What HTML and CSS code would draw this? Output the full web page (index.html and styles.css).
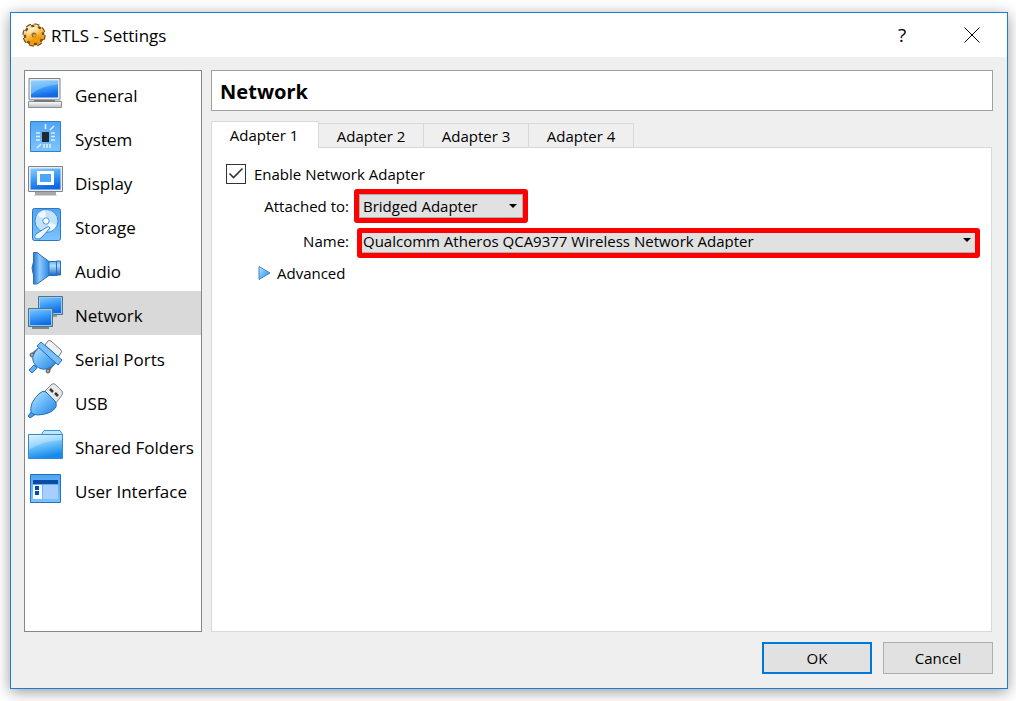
FILE: index.html
```html
<!DOCTYPE html>
<html lang="en">
  <head>
    <meta charset="UTF-8" />
    <title>RTLS - Settings</title>
    <link rel="stylesheet" href="styles.css">
  </head>
  <body>
    <!-- Shared icon gradients -->
    <svg class="defs" width="0" height="0" aria-hidden="true">
      <defs>
        <linearGradient id="screen" x1="0" y1="0" x2="0.3" y2="1">
          <stop offset="0" stop-color="#8accff" />
          <stop offset="0.5" stop-color="#3f9ef8" />
          <stop offset="1" stop-color="#0f68e4" />
        </linearGradient>
        <linearGradient id="sky" x1="0" y1="0" x2="0" y2="1">
          <stop offset="0" stop-color="#4fa5f2" />
          <stop offset="1" stop-color="#7cc4ff" />
        </linearGradient>
        <linearGradient id="metal" x1="0" y1="0" x2="0" y2="1">
          <stop offset="0" stop-color="#ffffff" />
          <stop offset="1" stop-color="#b9bcbe" />
        </linearGradient>
        <linearGradient id="plug" x1="0" y1="0" x2="1" y2="1">
          <stop offset="0" stop-color="#c5e6ff" />
          <stop offset="0.5" stop-color="#65b7fa" />
          <stop offset="1" stop-color="#2380dc" />
        </linearGradient>
        <linearGradient id="folder" x1="0" y1="0" x2="0.3" y2="1">
          <stop offset="0" stop-color="#d5f1ff" />
          <stop offset="0.45" stop-color="#7dcafc" />
          <stop offset="1" stop-color="#158bed" />
        </linearGradient>
        <linearGradient id="horn" x1="0" y1="0" x2="1" y2="0">
          <stop offset="0" stop-color="#2478cf" />
          <stop offset="0.4" stop-color="#8ecbff" />
          <stop offset="1" stop-color="#2a86e2" />
        </linearGradient>
        <linearGradient id="pipe" x1="0" y1="0" x2="0" y2="1">
          <stop offset="0" stop-color="#5fb0f8" />
          <stop offset="0.3" stop-color="#b4dfff" />
          <stop offset="1" stop-color="#1668c4" />
        </linearGradient>
        <linearGradient id="gold" x1="0" y1="0" x2="0.4" y2="1">
          <stop offset="0" stop-color="#fff3d6" />
          <stop offset="0.5" stop-color="#f9c55c" />
          <stop offset="1" stop-color="#f09a0c" />
        </linearGradient>
      </defs>
    </svg>

    <div class="window">
      <header class="title-bar">
        <svg class="gear" viewBox="0 0 24 24" aria-hidden="true">
          <g fill="none" stroke="#7d4a12">
            <circle cx="12" cy="12" r="8.500" stroke-width="4" />
            <circle cx="12" cy="12" r="9.700" stroke-width="4" stroke-dasharray="4.600 3.020" />
          </g>
          <g fill="none" stroke="url(#gold)">
            <circle cx="12" cy="12" r="5" stroke-width="6" />
            <circle cx="12" cy="12" r="9" stroke-width="3" stroke-dasharray="4 3.070" />
          </g>
          <circle cx="12" cy="12" r="2.500" fill="#a66a1e" />
          <circle cx="12.500" cy="12.500" r="1.300" fill="#e0b16b" />
        </svg>
        <h1>RTLS - Settings</h1>
        <button type="button" class="title-button" aria-label="Help">?</button>
        <button type="button" class="title-button" aria-label="Close">
          <svg width="16" height="16" viewBox="0 0 16 16" aria-hidden="true">
            <path d="M0.500 0.500l15 15M15.500 0.500l-15 15" stroke="#000" />
          </svg>
        </button>
      </header>

      <div class="content">
        <!-- Categories -->
        <nav class="sidebar">
          <a href="#general">
            <svg viewBox="0 0 36 36" aria-hidden="true">
              <path d="M2 3.500h31v21H2z" fill="#e9ebec" stroke="#7e8385" />
              <path d="M4 5.500h27v17H4z" fill="url(#screen)" />
              <path d="M4 5.500h27v4q-16 1-27 10z" fill="#a8daff" opacity=".45" />
              <path d="M3 24.500h30l1.500 2h-33z" fill="#c9cccd" />
              <path d="M1.500 26.500h33v6h-33z" fill="url(#metal)" stroke="#8b8f91" />
              <path d="M7 25h21v2H7z" fill="#777b7d" />
            </svg>
            General
          </a>
          <a href="#system">
            <svg viewBox="0 0 36 36" aria-hidden="true">
              <path d="M3.500 2.500h30v30h-30z" fill="url(#sky)" stroke="#3180cd" />
              <path d="M15 13h7v10h-7z" fill="#222a31" />
              <path d="M18.500 5v5M23 11l4-4M9 14h4M9 17.500h4M9 21h4M24 14h4M24 17.500h4M24 21h4M10 29l4-4M17 25v4M20 25v4M23 25v4" fill="none" stroke="#d9efff" stroke-width="1.600" />
            </svg>
            System
          </a>
          <a href="#display">
            <svg viewBox="0 0 36 36" aria-hidden="true">
              <path d="M1.500 3.500h34v25h-34z" fill="#e9ebec" stroke="#808688" />
              <path d="M3.500 5.500h30v21h-30z" fill="url(#screen)" />
              <path d="M11.500 9.500h14v11h-14z" fill="#4ba5f8" stroke="#fff" stroke-width="3" />
              <path d="M8 29h21v3H8z" fill="#a5a9ab" />
              <path d="M7 32.500h23" stroke="#d0d2d3" />
            </svg>
            Display
          </a>
          <a href="#storage">
            <svg viewBox="0 0 36 36" aria-hidden="true">
              <rect x="5.500" y="1.500" width="28" height="32" rx="2" fill="url(#sky)" stroke="#2b77c5" />
              <circle cx="19.500" cy="14" r="11.500" fill="#c3e3fd" stroke="#3c8ddd" />
              <path d="M19.500 14L10 8a11 11 0 0 1 8-5zM19.500 14l10 4a11 11 0 0 1-6 6z" fill="#fff" opacity=".7" />
              <circle cx="19" cy="14" r="3.200" fill="#fff" stroke="#4a9ae5" />
              <path d="M20 20q2-1 3 1l-7 8q-3 4-7 3-3-2 0-5z" fill="#edf7ff" stroke="#3985cf" />
            </svg>
            Storage
          </a>
          <a href="#audio">
            <svg viewBox="0 0 36 36" aria-hidden="true">
              <path d="M21 10.500h9v14h-9z" fill="url(#pipe)" stroke="#2b6fb7" />
              <path d="M29.500 10h4v14h-4z" fill="url(#pipe)" stroke="#2b6fb7" />
              <path d="M6.500 1.500H10l12 9v14l-12 8.500H6.500z" fill="url(#horn)" stroke="#2c70b8" />
              <path d="M6.500 11q-3 6 0 13z" fill="#3989d8" stroke="#2c70b8" />
            </svg>
            Audio
          </a>
          <a href="#network" class="active" aria-current="page">
            <svg viewBox="0 0 36 36" aria-hidden="true">
              <path d="M11.500 1.500h24v18h-24z" fill="url(#screen)" stroke="#557184" />
              <path d="M12.500 2.500h22v16h-22z" fill="none" stroke="#8dccff" />
              <path d="M17 20h13v2H17z" fill="#8f9a9f" />
              <path d="M1.500 13.500h24v18h-24z" fill="url(#screen)" stroke="#557184" />
              <path d="M2.500 14.500h22v16h-22z" fill="none" stroke="#8dccff" />
              <path d="M5 32h17v2H5z" fill="#7c878d" />
            </svg>
            Network
          </a>
          <a href="#serial-ports">
            <svg viewBox="0 0 36 36" aria-hidden="true">
              <path d="M18 6l3-4q1-1 3 0l10 9q1 1 0 3l-3 4z" fill="#eff1f2" stroke="#757d82" />
              <path d="M6 15l6-5M21 32l5-7" stroke="#68757e" stroke-width="3" />
              <circle cx="5" cy="16" r="2" fill="#a0a7ab" stroke="#555d62" />
              <circle cx="21" cy="32" r="2" fill="#a0a7ab" stroke="#555d62" />
              <path d="M7 26l-5 5 3 3 5-5z" fill="#5cb2f8" stroke="#2975b8" />
              <path d="M12 8l17 16-5 4q-8 5-15-1-6-7-1-14z" fill="url(#plug)" stroke="#256fb3" />
              <path d="M14 3l21 18-4 5L10 7z" fill="#79c1fb" stroke="#256fb3" />
            </svg>
            Serial Ports
          </a>
          <a href="#usb">
            <svg viewBox="0 0 36 36" aria-hidden="true">
              <path d="M18 8l7-7q2-1 4 1l6 6q1 2 0 4l-6 8z" fill="#e6e8e9" stroke="#7f878b" />
              <path d="M23 6l3 3M28 10l3 3" stroke="#34393c" stroke-width="2.500" />
              <path d="M5 28l-4 5 2 2 6-4z" fill="#3d9def" stroke="#266fb0" />
              <path d="M13 10q3-3 6-1l9 9q2 3 1 6-4 7-18 8-5 0-7-3-1-3 1-9 3-6 8-10z" fill="url(#plug)" stroke="#266fb0" />
            </svg>
            USB
          </a>
          <a href="#shared-folders">
            <svg viewBox="0 0 36 36" aria-hidden="true">
              <path d="M14 8l3-4.500h16l2.500 4v10H14z" fill="#bce7ff" stroke="#3c98dd" />
              <path d="M1.500 7.500h34v24h-34z" fill="url(#folder)" stroke="#3489d0" />
              <path d="M2 8h33v5q-18 0-33 10z" fill="#fff" opacity=".25" />
            </svg>
            Shared Folders
          </a>
          <a href="#user-interface">
            <svg viewBox="0 0 36 36" aria-hidden="true">
              <path d="M3.500 3.500h30v28h-30z" fill="url(#sky)" stroke="#2772c0" />
              <path d="M6 9h25v4H6z" fill="#0a4ba3" />
              <path d="M6 14h9v14H6z" fill="#f5faff" />
              <path d="M16 14h15v14H16z" fill="#a6ceff" />
              <path d="M8 15h4v4H8zM8 20h4v4H8z" fill="#0a4ba3" />
            </svg>
            User Interface
          </a>
        </nav>

        <main class="main">
          <h2>Network</h2>

          <div class="tabs" role="tablist">
            <button type="button" role="tab" class="tab selected" aria-selected="true">Adapter 1</button>
            <button type="button" role="tab" class="tab">Adapter 2</button>
            <button type="button" role="tab" class="tab">Adapter 3</button>
            <button type="button" role="tab" class="tab">Adapter 4</button>
          </div>

          <form class="panel" id="adapterForm">
            <label class="enable"><input type="checkbox" checked /> Enable Network Adapter</label>

            <div class="fields">
              <label for="attached">Attached to:</label>
              <div class="highlight attached">
                <select id="attached">
                  <option>Bridged Adapter</option>
                </select>
              </div>
              <label for="name">Name:</label>
              <div class="highlight name">
                <select id="name">
                  <option>Qualcomm Atheros QCA9377 Wireless Network Adapter</option>
                </select>
              </div>
            </div>

            <button type="button" class="advanced">
              <svg width="13" height="16" viewBox="0 0 13 16" aria-hidden="true">
                <path d="M1 1.500l11 6.500-11 6.500z" fill="url(#plug)" stroke="#3d87c9" />
              </svg>
              Advanced
            </button>
          </form>
        </main>
      </div>

      <footer class="buttons">
        <button type="submit" form="adapterForm" class="primary">OK</button>
        <button type="button">Cancel</button>
      </footer>
    </div>
  </body>
</html>
```
FILE: styles.css
```css
* {
  box-sizing: border-box;
}

body {
  margin: 0;
  min-height: 100vh;
  padding: 12px 8px 12px 10px;
  display: flex;
  background: #fff;
  font-family: "Open Sans", "Noto Sans", sans-serif;
  font-size: 15px;
  color: #000;
}

button,
select {
  font: inherit;
  color: inherit;
}

.defs {
  position: absolute;
}

.window {
  flex: 1;
  display: flex;
  flex-direction: column;
  background: #efefef;
  border: 1px solid #1a7fd4;
  box-shadow: 0 3px 14px rgba(0, 0, 0, 0.4);
}

/* Title bar */
.title-bar {
  display: flex;
  align-items: center;
  height: 44px;
  padding-left: 11px;
  background: #fff;
}

.gear {
  width: 24px;
  height: 24px;
  margin-right: 5px;
}

.title-bar h1 {
  flex: 1;
  margin: 0;
  font-size: 17px;
  font-weight: 400;
}

.title-button {
  width: 70px;
  height: 44px;
  padding: 0;
  border: none;
  background: none;
  font-size: 19px;
}

.title-button svg {
  display: block;
  margin: auto;
}

.content {
  flex: 1;
  display: flex;
  gap: 9px;
  padding: 13px 14px 0 13px;
}

/* Sidebar */
.sidebar {
  width: 178px;
  background: #fff;
  border: 1px solid #828790;
}

.sidebar a {
  display: flex;
  align-items: center;
  gap: 12px;
  height: 44px;
  padding: 4px 0 0 2px;
  color: #000;
  font-size: 17px;
  text-decoration: none;
  white-space: nowrap;
}

.sidebar a.active {
  background: #d9d9d9;
}

.sidebar svg {
  width: 36px;
  height: 36px;
  margin-bottom: 4px;
}

/* Settings page */
.main {
  flex: 1;
  display: flex;
  flex-direction: column;
}

.main h2 {
  height: 41px;
  margin: 0 0 10px;
  padding-left: 8px;
  border: 1px solid #a0a0a0;
  background: #fff;
  font-family: "Noto Sans", "Open Sans", sans-serif;
  font-size: 20px;
  line-height: 41px;
}

.tabs {
  display: flex;
  align-items: flex-end;
}

.tab {
  width: 105px;
  height: 24px;
  padding: 0;
  border: 1px solid #d9d9d9;
  border-width: 1px 1px 0 0;
  background: #efefef;
  line-height: 24px;
}

.tab.selected {
  width: 108px;
  height: 27px;
  margin-bottom: -1px;
  padding-right: 2px;
  border-left-width: 1px;
  background: #fff;
  z-index: 1;
}

.panel {
  flex: 1;
  margin-right: 1px;
  padding: 14px 11px 0 14px;
  border: 1px solid #d9d9d9;
  background: #fff;
}

.enable {
  display: flex;
  align-items: center;
  gap: 8px;
  height: 24px;
}

.enable input {
  appearance: none;
  width: 20px;
  height: 20px;
  margin: 0;
  border: 1px solid #333;
  background: url("data:image/svg+xml,%3Csvg xmlns='http://www.w3.org/2000/svg' viewBox='0 0 18 18'%3E%3Cpath d='M2.500 8.500l4 4 9-9' fill='none' stroke='%23333' stroke-width='1.600'/%3E%3C/svg%3E");
}

.fields {
  display: grid;
  grid-template-columns: 123px 1fr;
  gap: 5px;
  align-items: center;
  margin-top: 3px;
}

.fields label {
  text-align: right;
}

.highlight {
  border: 5px solid #f00;
  border-radius: 3px;
}

.highlight select {
  display: block;
  appearance: none;
  width: 100%;
  height: 24px;
  padding: 0 22px 0 3px;
  border: 1px solid #adadad;
  border-radius: 0;
  background: #e1e1e1 url("data:image/svg+xml,%3Csvg xmlns='http://www.w3.org/2000/svg' width='8' height='4'%3E%3Cpath d='M0 0h8l-4 4z'/%3E%3C/svg%3E") no-repeat right 5px center;
}

.highlight.attached {
  width: 174px;
}

.highlight.name {
  margin-left: 3px;
}

.highlight.name select {
  height: 20px;
  padding: 0 22px 3px 1px;
  border-width: 0 0 1px;
  background-position: right 4px top 5px;
  line-height: 16px;
}

.fields label[for="name"] {
  padding-bottom: 4px;
}

.advanced {
  display: flex;
  align-items: center;
  gap: 6px;
  margin: 5px 0 0 32px;
  padding: 0;
  border: none;
  background: none;
}

/* Dialog buttons */
.buttons {
  display: flex;
  justify-content: flex-end;
  gap: 11px;
  padding: 10px 14px 14px;
}

.buttons button {
  width: 110px;
  height: 32px;
  padding: 0;
  border: 1px solid #adadad;
  background: #e1e1e1;
}

.buttons .primary {
  border: 2px solid #0078d7;
}
```
